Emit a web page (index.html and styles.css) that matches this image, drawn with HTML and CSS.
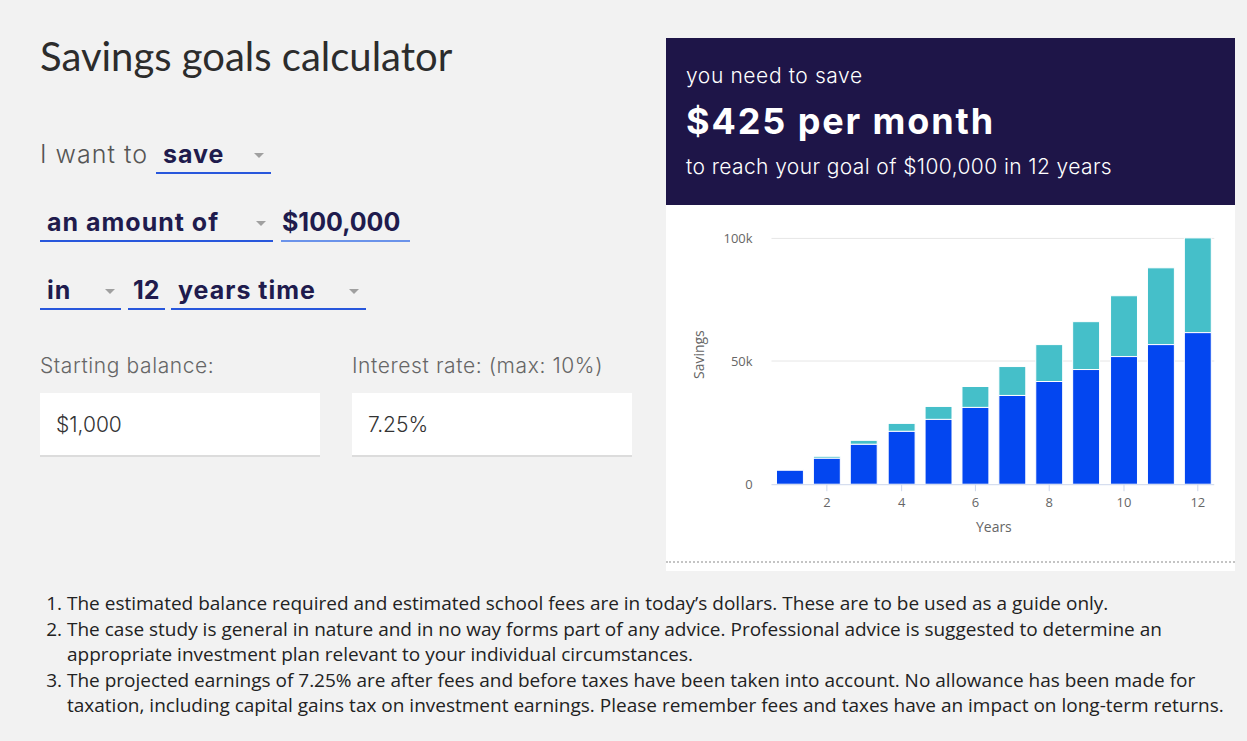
FILE: index.html
```html
<!DOCTYPE html>
<html lang="en">
<head>
<meta charset="utf-8">
<title>Savings goals calculator</title>
<link rel="stylesheet" href="styles.css">
</head>
<body>
<main class="calc">
  <section class="form">
    <h1 class="title">Savings goals calculator</h1>
    <div class="row">
      <span class="lead">I want to</span>
      <span class="select w-save"><span class="val">save</span><span class="caret"></span></span>
    </div>
    <div class="row">
      <span class="select w-amount"><span class="val">an amount of</span><span class="caret"></span></span>
      <span class="select w-money light"><span class="val num">$100,000</span></span>
    </div>
    <div class="row">
      <span class="select w-in"><span class="val">in</span><span class="caret"></span></span>
      <span class="select w-num"><span class="val num">12</span></span>
      <span class="select w-years"><span class="val">years time</span><span class="caret"></span></span>
    </div>
    <div class="fields">
      <label class="field">
        <span class="label">Starting balance:</span>
        <span class="input">$1,000</span>
      </label>
      <label class="field">
        <span class="label">Interest rate: (max: 10%)</span>
        <span class="input">7.25%</span>
      </label>
    </div>
  </section>

  <section class="card">
    <div class="result">
      <p class="r-small">you need to save</p>
      <p class="r-big">$425 per month</p>
      <p class="r-sub">to reach your goal of $100,000 in 12 years</p>
    </div>
    <div class="chart">
      <svg class="chart-svg" width="569" height="357" viewBox="0 0 569 357">
        <g class="grid">
          <line x1="105" y1="33.5" x2="549" y2="33.5"/>
          <line x1="105" y1="156.5" x2="549" y2="156.5"/>
        </g>
        <g class="ylabels">
          <text x="86" y="38">100k</text>
          <text x="86" y="161">50k</text>
          <text x="86" y="285">0</text>
        </g>
        <text class="ytitle" transform="translate(37 150) rotate(-90)">Savings</text>
        <g class="bars">
          <rect class="teal" x="110" y="265" width="27" height="1"/><rect class="blue" x="110" y="266" width="27" height="14"/>
          <rect class="teal" x="147" y="252" width="27" height="2"/><rect class="blue" x="147" y="254" width="27" height="26"/>
          <rect class="teal" x="184" y="236" width="27" height="4"/><rect class="blue" x="184" y="240" width="27" height="40"/>
          <rect class="teal" x="222" y="219" width="27" height="8"/><rect class="blue" x="222" y="227" width="27" height="53"/>
          <rect class="teal" x="259" y="202" width="27" height="13"/><rect class="blue" x="259" y="215" width="27" height="65"/>
          <rect class="teal" x="296" y="182" width="27" height="21"/><rect class="blue" x="296" y="203" width="27" height="77"/>
          <rect class="teal" x="333" y="162" width="27" height="29"/><rect class="blue" x="333" y="191" width="27" height="89"/>
          <rect class="teal" x="370" y="140" width="27" height="37"/><rect class="blue" x="370" y="177" width="27" height="103"/>
          <rect class="teal" x="407" y="117" width="27" height="48"/><rect class="blue" x="407" y="165" width="27" height="115"/>
          <rect class="teal" x="445" y="91" width="27" height="61"/><rect class="blue" x="445" y="152" width="27" height="128"/>
          <rect class="teal" x="482" y="63" width="27" height="77"/><rect class="blue" x="482" y="140" width="27" height="140"/>
          <rect class="teal" x="519" y="33" width="27" height="95"/><rect class="blue" x="519" y="128" width="27" height="152"/>
        </g>
        <line class="axis" x1="105" y1="280.5" x2="549" y2="280.5"/>
        <g class="ticks">
          <line x1="160.5" y1="280" x2="160.5" y2="287"/>
          <line x1="235.5" y1="280" x2="235.5" y2="287"/>
          <line x1="309.5" y1="280" x2="309.5" y2="287"/>
          <line x1="383.5" y1="280" x2="383.5" y2="287"/>
          <line x1="458.5" y1="280" x2="458.5" y2="287"/>
          <line x1="532.5" y1="280" x2="532.5" y2="287"/>
        </g>
        <g class="xlabels">
          <text x="160.5" y="303">2</text>
          <text x="235.5" y="303">4</text>
          <text x="309.5" y="303">6</text>
          <text x="383.5" y="303">8</text>
          <text x="458.5" y="303">10</text>
          <text x="532.5" y="303">12</text>
        </g>
        <text class="xtitle" x="328" y="328">Years</text>
      </svg>
    </div>
  </section>
</main>

<footer class="notes">
  <ol>
    <li>The estimated balance required and estimated school fees are in today’s dollars. These are to be used as a guide only.</li>
    <li>The case study is general in nature and in no way forms part of any advice. Professional advice is suggested to determine an appropriate investment plan relevant to your individual circumstances.</li>
    <li>The projected earnings of 7.25% are after fees and before taxes have been taken into account. No allowance has been made for taxation, including capital gains tax on investment earnings. Please remember fees and taxes have an impact on long-term returns.</li>
  </ol>
</footer>
</body>
</html>
```

FILE: styles.css
```css
* { box-sizing: border-box; }

html, body {
  margin: 0;
  padding: 0;
  background: #f2f2f2;
}

body {
  width: 1247px;
  height: 741px;
  overflow: hidden;
  font-family: "Inter", "DejaVu Sans", sans-serif;
}

.calc {
  display: grid;
  grid-template-columns: 1fr 569px;
  align-items: start;
  padding: 32px 12px 0 40px;
  height: 571px;
}

/* ---------- left form ---------- */
.title {
  margin: 0;
  font-family: "Lato", sans-serif;
  font-weight: 400;
  font-size: 40px;
  line-height: 48px;
  color: #2c2c2c;
  letter-spacing: 0;
}

.row {
  display: flex;
  align-items: flex-end;
  gap: 8px;
  margin-top: 34px;
}
.title + .row { margin-top: 60px; }

.lead {
  font-size: 25px;
  font-weight: 300;
  line-height: 28px;
  letter-spacing: 1px;
  color: #555;
  padding-bottom: 6px;
}

.select {
  display: flex;
  align-items: center;
  justify-content: space-between;
  height: 34px;
  padding: 0 7px 4px 7px;
  border-bottom: 2px solid #2857dc;
}
.select.light { border-bottom-color: #6b93ea; }

.val {
  font-size: 25px;
  font-weight: 700;
  line-height: 28px;
  letter-spacing: 1px;
  color: #201b4d;
}
.val.num { letter-spacing: 0; }

.caret {
  width: 0;
  height: 0;
  border-left: 5px solid transparent;
  border-right: 5px solid transparent;
  border-top: 5px solid #a0a0a0;
  margin-top: 2px;
}

.w-save { width: 115px; }
.w-amount { width: 233px; }
.w-money { width: 129px; padding-left: 1px; }
.w-in { width: 81px; padding-right: 6px; }
.w-num { width: 37px; padding-left: 5px; margin-left: -1px; }
.w-years { width: 195px; margin-left: -2px; }

.fields {
  display: grid;
  grid-template-columns: 280px 280px;
  column-gap: 32px;
  margin-top: 44px;
}

.field {
  display: flex;
  flex-direction: column;
  gap: 15px;
}

.label {
  font-size: 21px;
  font-weight: 300;
  line-height: 24px;
  letter-spacing: 0.6px;
  color: #666;
}

.input {
  display: flex;
  align-items: center;
  height: 64px;
  padding: 0 16px;
  background: #fff;
  border-bottom: 2px solid #dcdcdc;
  font-size: 21px;
  font-weight: 300;
  color: #333;
}

/* ---------- right card ---------- */
.card {
  margin-top: 6px;
  background: #fff;
}

.result {
  height: 167px;
  background: #1e1548;
  color: #fff;
  padding: 25px 20px 0 20px;
}

.result p { margin: 0; }

.r-small {
  font-size: 21px;
  line-height: 26px;
  font-weight: 300;
  letter-spacing: 0.6px;
}

.r-big {
  margin-top: 12px !important;
  font-size: 36px;
  line-height: 40px;
  font-weight: 700;
  letter-spacing: 1.9px;
}

.r-sub {
  margin-top: 13px !important;
  font-size: 21px;
  line-height: 26px;
  font-weight: 300;
  letter-spacing: 0.4px;
}

.chart {
  height: 366px;
  padding-bottom: 8px;
}

.chart-svg {
  display: block;
  border-bottom: 2px dotted #c4c4c4;
  height: 358px;
  font-family: "Open Sans", "DejaVu Sans", sans-serif;
}

.grid line { stroke: #e6e6e6; stroke-width: 1; }
.axis { stroke: #ccd6eb; stroke-width: 1; }
.ticks line { stroke: #ccd6eb; stroke-width: 1; }

.ylabels text {
  font-size: 13px;
  fill: #666;
  text-anchor: end;
}

.xlabels text {
  font-size: 13px;
  fill: #666;
  text-anchor: middle;
}

.ytitle, .xtitle {
  font-size: 14px;
  fill: #666;
  text-anchor: middle;
}

.bars rect { stroke: #fff; stroke-width: 1; }
.teal { fill: #45bfc9; }
.blue { fill: #0346f0; }

/* ---------- footer notes ---------- */
.notes {
  padding: 20px 8px 0 0;
  font-family: "Open Sans", sans-serif;
  font-size: 19px;
  line-height: 25.5px;
  color: #222;
}

.notes ol {
  margin: 0;
  padding-left: 67px;
}
```
